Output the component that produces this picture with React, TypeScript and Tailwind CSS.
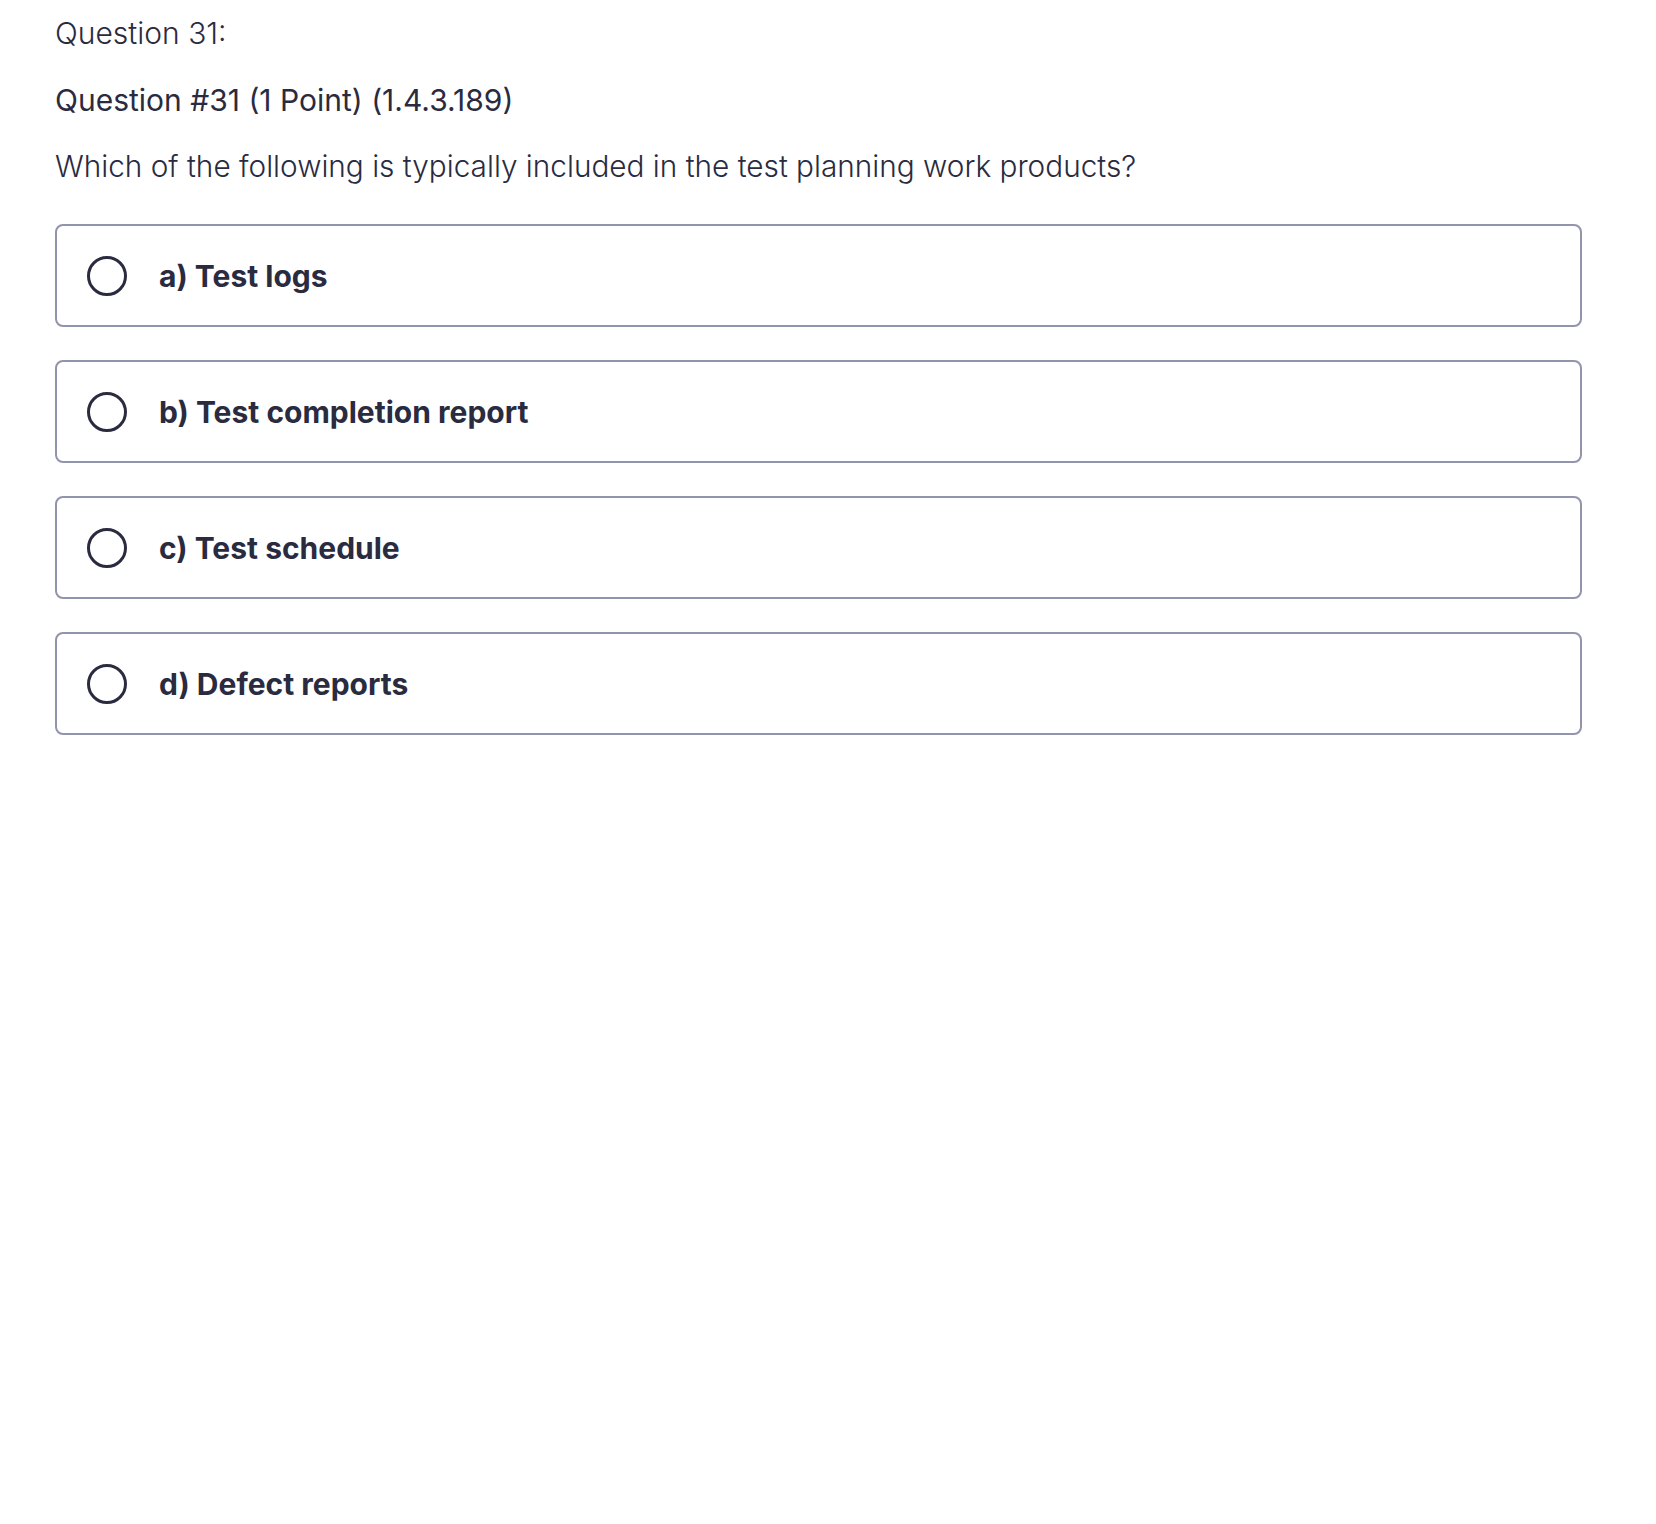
import React from "react";

const options = [
  "a) Test logs",
  "b) Test completion report",
  "c) Test schedule",
  "d) Defect reports",
];

export default function App() {
  return (
    <div
      className="min-h-[1524px] w-full bg-white pl-[55px] pr-[74px] pt-[13px] text-[#2a2b3f]"
      style={{ fontFamily: "Inter, 'Noto Sans', sans-serif" }}
    >
      <p className="text-[30px] font-light leading-10">Question 31:</p>
      <p className="mt-[27px] text-[30px] font-normal leading-10">
        Question #31 (1 Point) (1.4.3.189)
      </p>
      <p className="mt-[26px] text-[29.75px] font-light leading-10">
        Which of the following is typically included in the test planning work products?
      </p>

      <div className="mt-[38px] flex flex-col gap-[33px]">
        {options.map((label) => (
          <label
            key={label}
            className="flex h-[103px] cursor-pointer items-center rounded-lg border-2 border-[#9194ac] pl-[30px]"
          >
            <span className="h-10 w-10 shrink-0 rounded-full border-[3.5px] border-[#2a2b3f]" />
            <span className="ml-[32px] text-[30px] font-bold leading-10">{label}</span>
          </label>
        ))}
      </div>
    </div>
  );
}
